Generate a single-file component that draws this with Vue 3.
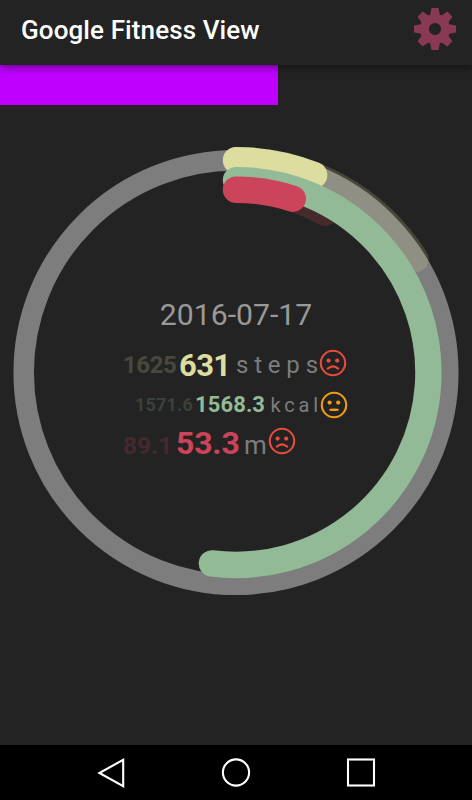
<template>
  <div class="screen">
    <header class="toolbar">
      <h1 class="title">Google Fitness View</h1>
      <svg class="gear" viewBox="-21 -21 42 42">
        <g fill="#893953">
          <path
            v-for="n in 8"
            :key="n"
            d="M-5 -13 L-3.6 -21 H3.6 L5 -13 Z"
            :transform="`rotate(${n * 45})`"
          />
        </g>
        <circle r="10.6" fill="none" stroke="#893953" stroke-width="9" />
      </svg>
    </header>

    <main class="content">
      <div class="progress"></div>

      <div class="dial">
        <svg class="rings" viewBox="-236 -236.5 472 473">
          <circle r="212.3" fill="none" stroke="#7d7d7d" stroke-width="20.5" />
          <g fill="none" stroke-width="26.4" stroke-linecap="round">
            <path
              v-for="(ring, i) in rings"
              :key="i"
              :d="arc(ring.r, ring.angle)"
              :stroke="ring.color"
              :stroke-opacity="ring.opacity"
            />
          </g>
        </svg>

        <div class="readout">
          <p class="date">2016-07-17</p>
          <div v-for="row in rows" :key="row.name" class="row" :class="row.name">
            <span class="average">{{ row.average }}</span>
            <span class="value">{{ row.value }}</span>
            <span class="unit">{{ row.unit }}</span>
            <svg class="face" :class="row.mood" viewBox="0 0 28 28">
              <circle cx="14" cy="14" r="12.2" fill="none" stroke="currentColor" stroke-width="2.1" />
              <circle cx="9.6" cy="11.6" r="2.1" fill="currentColor" />
              <circle cx="18.2" cy="11.6" r="2.1" fill="currentColor" />
              <path
                v-if="row.mood === 'sad'"
                d="M8.8 19.6 Q14 15 19.2 19.6"
                fill="none"
                stroke="currentColor"
                stroke-width="2.1"
                stroke-linecap="round"
              />
              <ellipse v-else cx="14" cy="18.8" rx="5" ry="1.2" fill="currentColor" />
            </svg>
          </div>
        </div>
      </div>
    </main>

    <nav class="navbar">
      <svg viewBox="0 0 30 30"><path d="M27.2 1.8 V28.2 L3.4 15 Z" /></svg>
      <svg viewBox="0 0 30 30"><circle cx="15" cy="14.5" r="13.1" /></svg>
      <svg viewBox="0 0 30 30"><rect x="2" y="1.5" width="26" height="26" /></svg>
    </nav>
  </div>
</template>

<script setup>
// average first, today's value on top of it
const rings = [
  { r: 212.3, angle: 57.7, color: '#dedda0', opacity: 0.19 },
  { r: 212.3, angle: 21.6, color: '#dedda0', opacity: 1 },
  { r: 182.8, angle: 29.1, color: '#cc4459', opacity: 0.2 },
  { r: 192.4, angle: 187.2, color: '#92ba96', opacity: 1 },
  { r: 182.8, angle: 18.1, color: '#cc4459', opacity: 1 }
];

const rows = [
  { name: 'steps', average: '1625', value: '631', unit: 'steps', mood: 'sad' },
  { name: 'kcal', average: '1571.6', value: '1568.3', unit: 'kcal', mood: 'neutral' },
  { name: 'distance', average: '89.1', value: '53.3', unit: 'm', mood: 'sad' }
];

// clockwise arc from 12 o'clock
const arc = (r, angle) => {
  const rad = (angle * Math.PI) / 180;
  const x = r * Math.sin(rad);
  const y = -r * Math.cos(rad);
  return `M0 ${-r} A${r} ${r} 0 ${angle > 180 ? 1 : 0} 1 ${x} ${y}`;
};
</script>

<style>
body {
  margin: 0;
  background: #232323;
}
</style>

<style scoped>
.screen {
  display: flex;
  flex-direction: column;
  width: 472px;
  height: 800px;
  overflow: hidden;
  background: #232323;
  font-family: Roboto, "Liberation Sans", sans-serif;
}
.toolbar {
  display: flex;
  justify-content: space-between;
  align-items: flex-start;
  box-sizing: border-box;
  height: 65px;
  padding: 8px 16px 0 21px;
  background: #232323;
  box-shadow: 0 2px 8px rgba(0, 0, 0, 0.5);
  z-index: 1;
}
.title {
  margin: 0;
  color: #fff;
  font-size: 26px;
  font-weight: 500;
  line-height: 44px;
  letter-spacing: 0.1px;
  white-space: nowrap;
}
.gear {
  width: 42px;
  height: 42px;
}
.content {
  flex: 1;
}
.progress {
  width: 278px;
  height: 40px;
  background: #bf00ff;
}
.dial {
  position: relative;
  height: 473px;
  margin-top: 31px;
}
.rings {
  display: block;
  width: 472px;
  height: 473px;
}
.readout {
  position: absolute;
  inset: 0;
  padding-top: 161px;
}
.date {
  margin: 0 0 14px;
  color: #999;
  font-size: 30.2px;
  font-weight: 400;
  line-height: 36px;
  text-align: center;
}
.row {
  display: flex;
  align-items: center;
  height: 36px;
  line-height: 36px;
  white-space: nowrap;
}
.average,
.value {
  font-weight: 700;
}
.average {
  opacity: 0.2;
}
.unit {
  color: #7d7d7d;
}
.face {
  flex: none;
  width: 28px;
  height: 28px;
}
.sad {
  color: #e74c3c;
}
.neutral {
  color: #f39c12;
}
.steps {
  padding-left: 123px;
  color: #dedda0;
}
.steps .average {
  width: 56px;
  font-size: 24px;
  letter-spacing: -0.4px;
}
.steps .value {
  width: 57px;
  padding-top: 1px;
  font-size: 31px;
  letter-spacing: -0.6px;
}
.steps .unit {
  width: 83px;
  font-size: 24px;
  letter-spacing: 5.8px;
}
.steps .face {
  margin-bottom: 4px;
}
.kcal {
  margin-top: 4px;
  padding-left: 135px;
  color: #92ba96;
}
.kcal .average {
  width: 60px;
  font-size: 18px;
  letter-spacing: 0.2px;
}
.kcal .value {
  width: 75.5px;
  font-size: 22px;
  letter-spacing: 0.1px;
}
.kcal .unit {
  width: 49px;
  font-size: 20px;
  letter-spacing: 3.8px;
}
.kcal .face {
  margin-bottom: 1px;
}
.distance {
  align-items: baseline;
  margin-top: 2px;
  padding-left: 123px;
  color: #cc4459;
}
.distance .average {
  width: 53px;
  font-size: 24.5px;
}
.distance .value {
  width: 68px;
  font-size: 32px;
  letter-spacing: -0.2px;
}
.distance .unit {
  width: 24px;
  font-size: 26px;
}
.distance .face {
  align-self: flex-start;
  margin-top: 2px;
}
.navbar {
  display: flex;
  justify-content: center;
  align-items: center;
  gap: 95px;
  height: 55px;
  background: #000;
}
.navbar svg {
  width: 30px;
  height: 30px;
  fill: none;
  stroke: #fff;
  stroke-width: 2.1;
}
</style>
